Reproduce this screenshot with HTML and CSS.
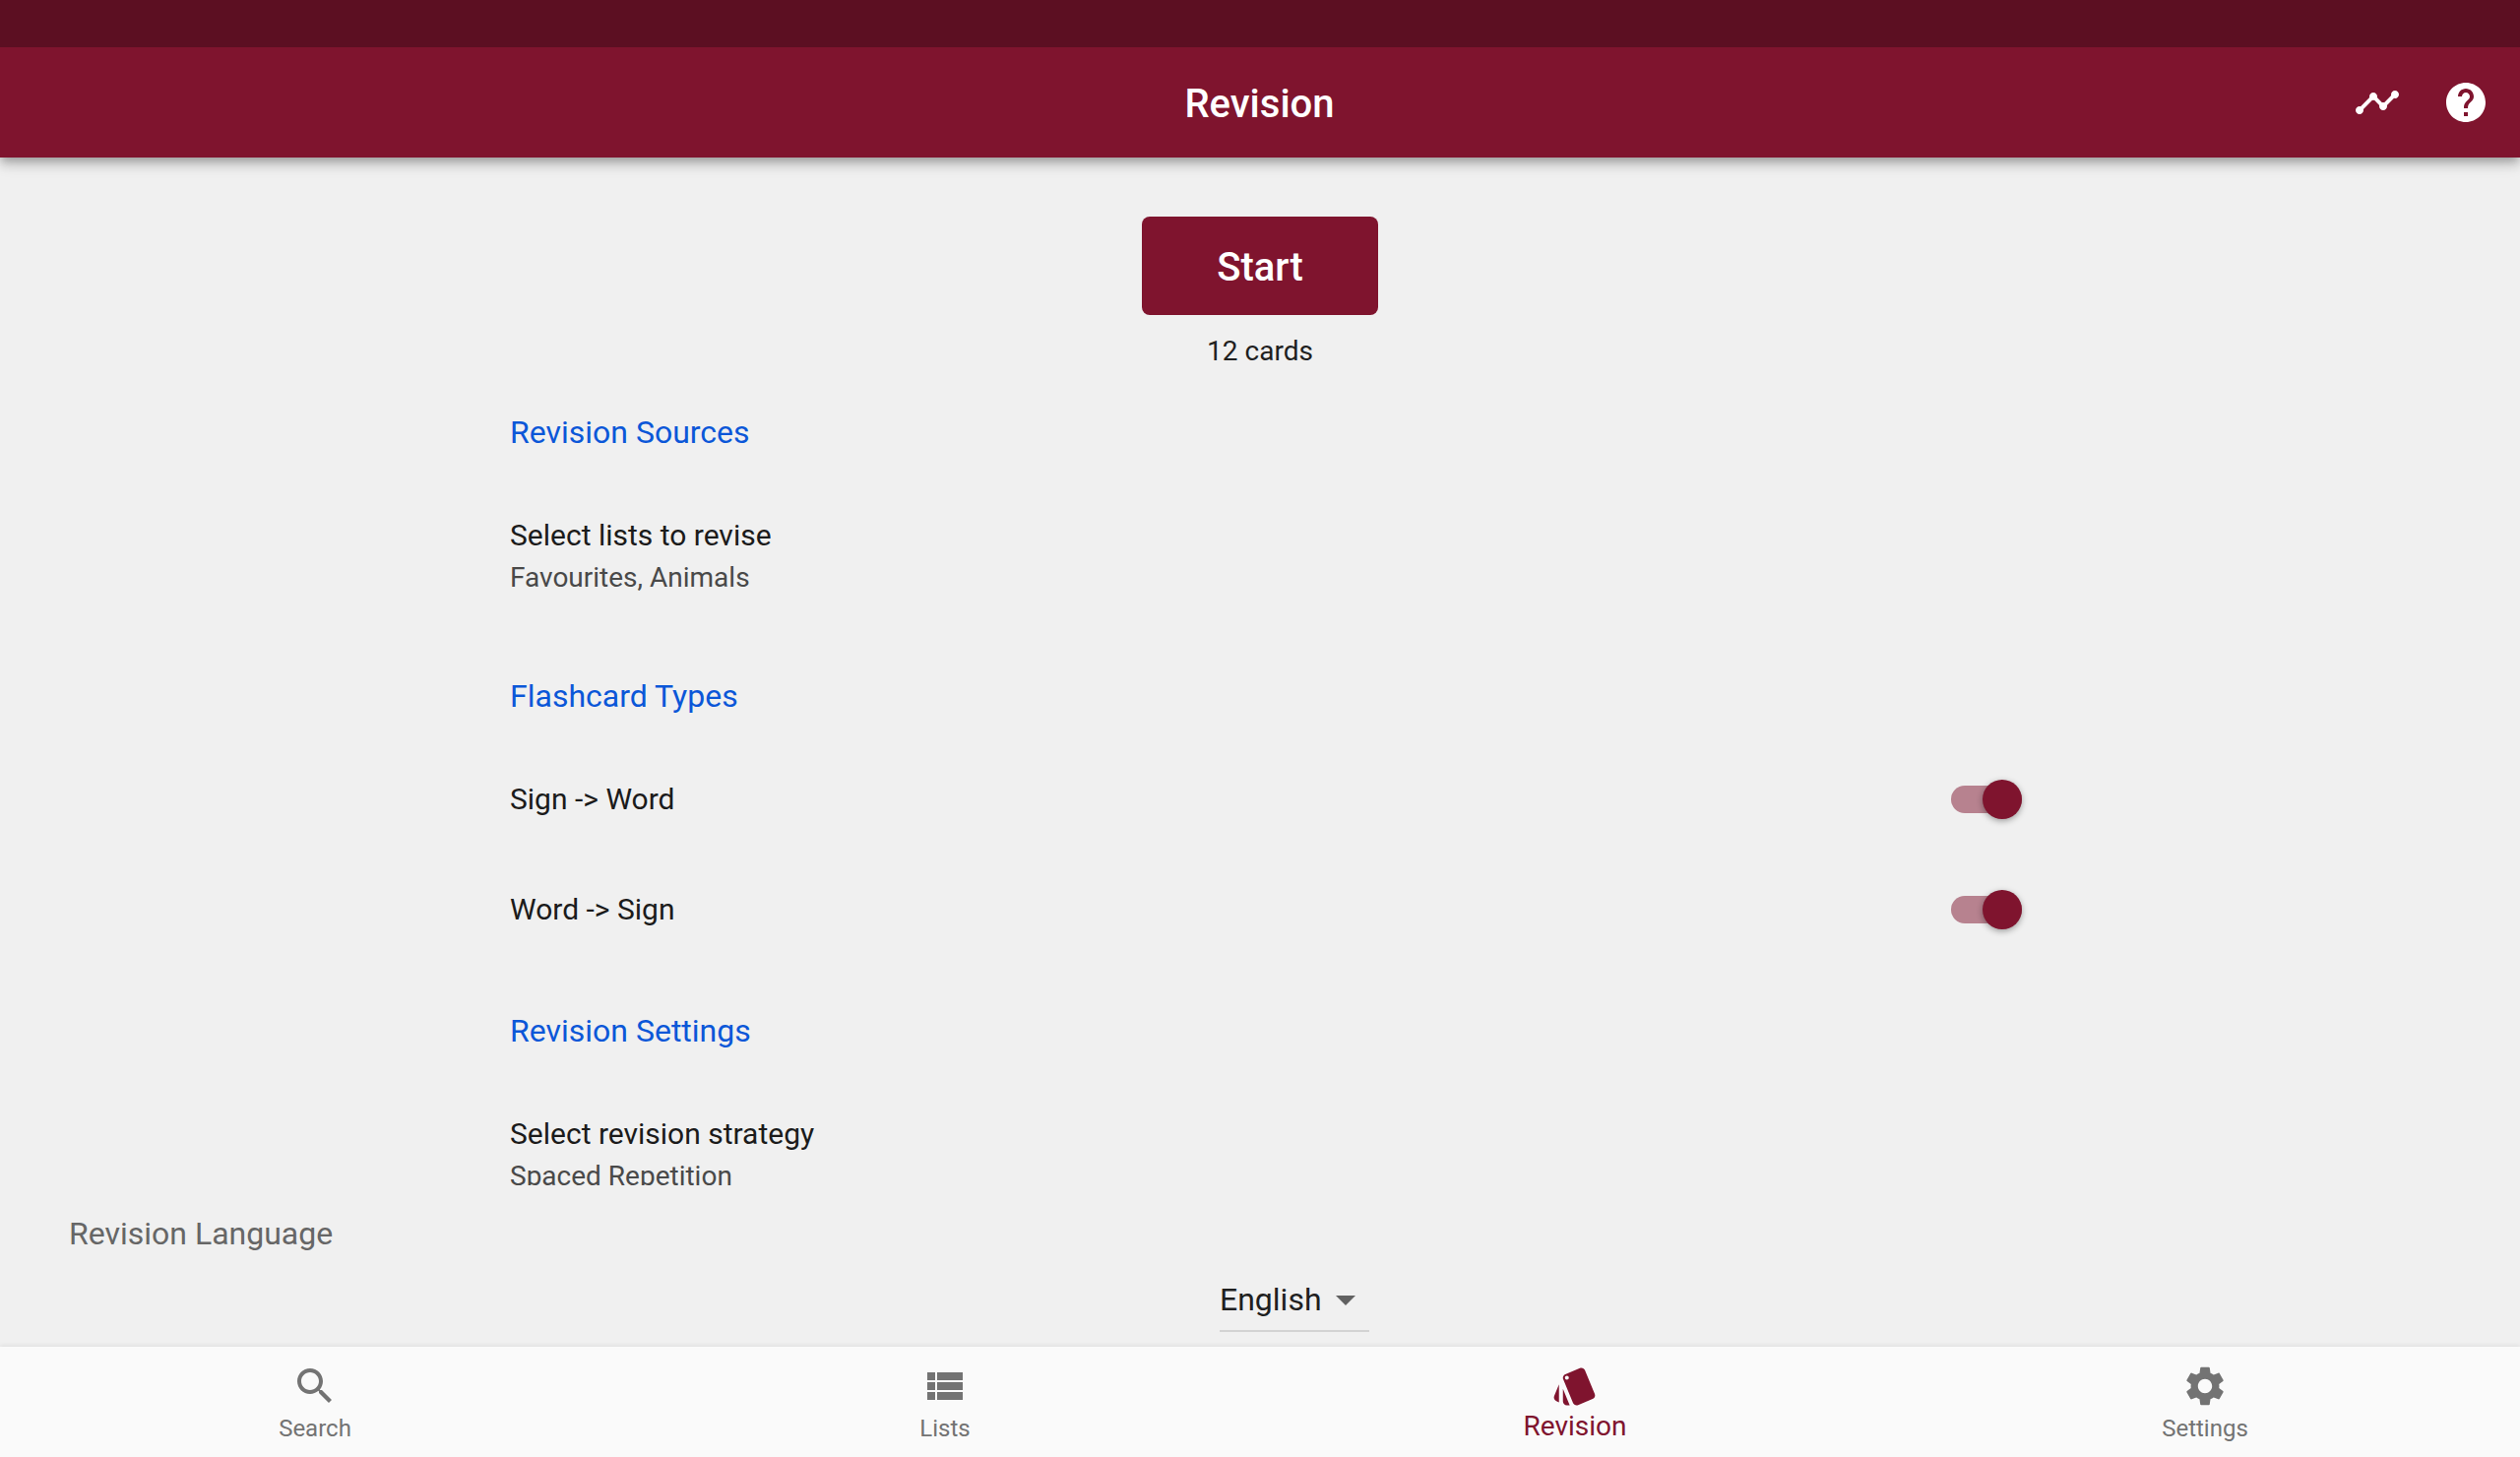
FILE: index.html
```html
<!DOCTYPE html>
<html lang="en">
<head>
<meta charset="utf-8">
<title>Revision</title>
<link rel="stylesheet" href="styles.css">
</head>
<body>
<div class="status"></div>
<header class="appbar">
  <h1 class="title">Revision</h1>
  <div class="actions">
    <svg class="icon action" viewBox="0 0 24 24"><path d="M23 8c0 1.100-.9 2-2 2-.18 0-.35-.02-.51-.07l-3.560 3.550c.05.16.07.34.07.52 0 1.100-.9 2-2 2s-2-.9-2-2c0-.18.02-.36.07-.52l-2.550-2.550c-.16.05-.34.07-.52.07s-.36-.02-.52-.07l-4.550 4.560c.05.16.07.33.07.51 0 1.100-.9 2-2 2s-2-.9-2-2 .9-2 2-2c.18 0 .35.02.51.07l4.560-4.550C8.020 9.360 8 9.180 8 9c0-1.100.9-2 2-2s2 .9 2 2c0 .18-.02.36-.07.52l2.550 2.550c.16-.05.34-.07.52-.07s.36.02.52.07l3.550-3.560C19.020 8.350 19 8.180 19 8c0-1.100.9-2 2-2s2 .9 2 2z"/></svg>
    <svg class="icon action" viewBox="0 0 24 24"><path d="M12 2C6.480 2 2 6.480 2 12s4.480 10 10 10 10-4.480 10-10S17.520 2 12 2zm1 17h-2v-2h2v2zm2.070-7.750l-.9.920C13.450 12.900 13 13.500 13 15h-2v-.5c0-1.100.45-2.100 1.170-2.830l1.240-1.260c.37-.36.59-.86.59-1.410 0-1.100-.9-2-2-2s-2 .9-2 2H8c0-2.210 1.790-4 4-4s4 1.790 4 4c0 .88-.36 1.680-.93 2.250z"/></svg>
  </div>
</header>
<main class="body">
  <div class="start-area">
    <button class="start">Start</button>
    <p class="cards">12 cards</p>
  </div>
  <div class="settings">
    <section class="group">
      <h2 class="section">Revision Sources</h2>
      <div class="tile tall"><div class="label">Select lists to revise</div><div class="value">Favourites, Animals</div></div>
    </section>
    <section class="group types">
      <h2 class="section">Flashcard Types</h2>
      <div class="tile row"><div class="label">Sign -&gt; Word</div><div class="switch"><span class="thumb"></span></div></div>
      <div class="tile row"><div class="label">Word -&gt; Sign</div><div class="switch"><span class="thumb"></span></div></div>
    </section>
    <section class="group">
      <h2 class="section">Revision Settings</h2>
      <div class="tile tall"><div class="label">Select revision strategy</div><div class="value">Spaced Repetition</div></div>
    </section>
  </div>
  <div class="language">
    <div class="language-label">Revision Language</div>
    <div class="select"><span>English</span><span class="caret"></span></div>
  </div>
</main>
<nav class="tabs">
  <div class="tab"><svg class="icon" viewBox="0 0 24 24"><path d="M15.500 14h-.79l-.28-.27C15.410 12.590 16 11.110 16 9.500 16 5.910 13.090 3 9.500 3S3 5.910 3 9.500 5.910 16 9.500 16c1.610 0 3.090-.59 4.230-1.570l.27.28v.79l5 4.990L20.490 19l-4.990-5zm-6 0C7.010 14 5 11.990 5 9.500S7.010 5 9.500 5 14 7.010 14 9.500 11.990 14 9.500 14z"/></svg><span>Search</span></div>
  <div class="tab"><svg class="icon" viewBox="0 0 24 24"><path d="M3 14h4v-4H3v4zm0 5h4v-4H3v4zM3 9h4V5H3v4zm5 5h13v-4H8v4zm0 5h13v-4H8v4zM8 5v4h13V5H8z"/></svg><span>Lists</span></div>
  <div class="tab active"><svg class="icon" viewBox="0 0 24 24"><path fill-rule="evenodd" d="M2.530 19.650l1.340.56v-9.030l-2.430 5.860c-.41 1.020.08 2.190 1.090 2.610zm19.500-3.700L17.070 3.980c-.31-.75-1.040-1.210-1.810-1.230-.26 0-.53.04-.79.15L7.100 5.950c-.75.31-1.210 1.030-1.230 1.800-.01.27.04.54.15.8l4.960 11.970c.31.76 1.050 1.220 1.830 1.230.26 0 .52-.05.770-.15l7.360-3.050c1.020-.42 1.510-1.590 1.090-2.600zM7.880 8.750c-.55 0-1-.45-1-1s.45-1 1-1 1 .45 1 1-.45 1-1 1zm-2 11c0 1.100.9 2 2 2h1.450l-3.450-8.340v6.340z"/></svg><span>Revision</span></div>
  <div class="tab"><svg class="icon" viewBox="0 0 24 24"><path d="M19.140 12.940c.04-.3.060-.61.060-.94 0-.32-.02-.64-.07-.94l2.030-1.580c.18-.14.23-.41.12-.61l-1.920-3.320c-.12-.22-.37-.29-.59-.22l-2.390.96c-.5-.38-1.030-.7-1.620-.94l-.36-2.540c-.04-.24-.24-.41-.48-.41h-3.840c-.24 0-.43.17-.47.41l-.36 2.540c-.59.24-1.130.57-1.620.94l-2.390-.96c-.22-.08-.47 0-.59.22L2.740 8.870c-.12.21-.08.47.12.61l2.030 1.580c-.05.3-.09.63-.09.94s.02.64.07.94l-2.030 1.580c-.18.14-.23.41-.12.61l1.920 3.320c.12.22.37.29.59.22l2.390-.96c.5.38 1.030.7 1.620.94l.36 2.540c.05.24.24.41.48.41h3.840c.24 0 .44-.17.47-.41l.36-2.540c.59-.24 1.130-.56 1.620-.94l2.390.96c.22.08.47 0 .59-.22l1.920-3.320c.12-.22.07-.47-.12-.61l-2.010-1.580zM12 15.600c-1.980 0-3.600-1.620-3.600-3.600s1.620-3.600 3.600-3.600 3.600 1.620 3.600 3.600-1.620 3.600-3.600 3.600z"/></svg><span>Settings</span></div>
</nav>
</body>
</html>
```

FILE: styles.css
```css
* { box-sizing: border-box; }
body {
  margin: 0;
  height: 1480px;
  display: flex;
  flex-direction: column;
  overflow: hidden;
  background: #f0f0f0;
  color: #1f1f1f;
  font-family: Roboto, sans-serif;
  font-size: 32px;
}
h1, h2, p { margin: 0; font-weight: 400; }
.icon { display: block; width: 48px; height: 48px; fill: currentColor; }
.status { height: 48px; background: #5c0f22; flex: none; position: relative; z-index: 1; }
.appbar {
  height: 112px;
  flex: none;
  display: grid;
  grid-template-columns: 1fr auto 1fr;
  align-items: center;
  background: #7f142e;
  color: #fff;
  box-shadow: 0 4px 8px -2px rgba(0, 0, 0, .2), 0 8px 10px rgba(0, 0, 0, .14), 0 2px 20px rgba(0, 0, 0, .12);
}
.title { grid-column: 2; padding: 3px 1px 0 0; font-size: 40px; line-height: 47px; font-weight: 500; }
.actions { display: flex; justify-content: flex-end; gap: 42px; padding-right: 31px; }
.body { flex: 1; min-height: 0; display: flex; flex-direction: column; }
.start-area { height: 231px; padding-top: 60px; text-align: center; flex: none; }
.start {
  display: block;
  width: 240px;
  height: 100px;
  margin: 0 auto;
  padding: 3px 0 0;
  border: 0;
  border-radius: 8px;
  background: #7f142e;
  color: #fff;
  font: 500 40px/47px Roboto, sans-serif;
}
.cards { margin-top: 20px; font-size: 28px; line-height: 34px; }
.settings {
  width: 1600px;
  height: 813px;
  margin: 0 auto;
  padding: 0 26px 0 38px;
  overflow: hidden;
  flex: none;
}
.section { height: 96px; padding-top: 29px; font-size: 32px; line-height: 38px; color: #0b57d8; }
.types { padding-bottom: 20px; }
.tile.tall { height: 172px; padding-top: 39px; }
.tile.row { height: 112px; padding-top: 2px; display: flex; align-items: center; justify-content: space-between; }
.label { font-size: 30px; line-height: 36px; color: #1b1b1b; }
.value { margin-top: 7px; font-size: 28px; line-height: 35px; color: #494949; }
.switch { width: 72px; height: 28px; border-radius: 14px; background: #b7828f; display: flex; align-items: center; justify-content: flex-end; }
.thumb { width: 40px; height: 40px; border-radius: 50%; background: #7f142e; flex: none; box-shadow: 0 2px 6px rgba(0, 0, 0, .35); }
.language { display: flex; flex-direction: column; }
.language-label { padding: 30px 0 0 70px; line-height: 38px; color: #666; }
.select { width: 152px; height: 64px; margin: 17px 0 0 1239px; display: flex; align-items: center; justify-content: space-between; padding-right: 14px; border-bottom: 2px solid #d3d3d3; }
.caret { margin-top: 2px; border: 10px solid transparent; border-top-color: #616161; border-bottom: 0; }
.tabs { height: 112px; flex: none; display: flex; background: #fafafa; box-shadow: 0 -2px 4px rgba(0, 0, 0, .06); }
.tab { flex: 1; display: flex; flex-direction: column; align-items: center; padding-top: 16px; font-size: 24px; line-height: 38px; color: #737373; }
.tab.active { color: #7f142e; font-size: 28px; line-height: 34px; }
```
